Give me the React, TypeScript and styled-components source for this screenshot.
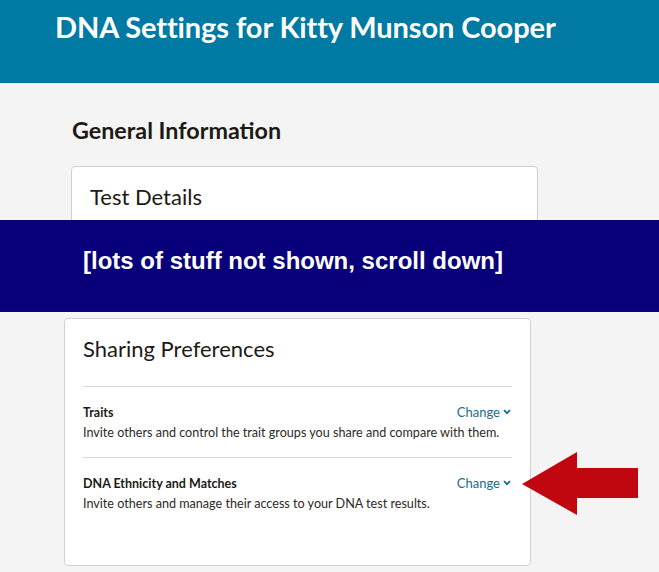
import { FC } from 'react'
import styled, { createGlobalStyle } from 'styled-components'

const GlobalStyle = createGlobalStyle`
  html, body {
    margin: 0;
    padding: 0;
    background: #f4f4f4;
  }
  body {
    font-family: Lato, "Source Sans Pro", "Noto Sans", sans-serif;
    color: #1d1a15;
  }
`

const Page = styled.div`
  width: 659px;
  height: 572px;
  overflow: hidden;
  position: relative;
  background: #f4f4f4;
`

const Header = styled.header`
  height: 83px;
  background: #0079a3;
  box-sizing: border-box;
  padding: 9px 0 0 55px;
`

const Title = styled.h1`
  margin: 0;
  color: #fff;
  font-size: 29px;
  font-weight: 700;
  line-height: 36px;
  letter-spacing: -0.1px;
`

const Section = styled.section<{ $left: number }>`
  padding-left: ${({ $left }) => $left}px;
`

const SectionHeading = styled.h2`
  margin: 0;
  padding: 33px 0 0 1px;
  font-size: 23.3px;
  font-weight: 700;
  line-height: 28px;
`

const Card = styled.div<{ $clip?: boolean }>`
  width: 467px;
  box-sizing: border-box;
  background: #fff;
  border: 1px solid #d0d0d0;
  border-radius: 4px;
  padding: 0 18px;
  ${({ $clip }) =>
    $clip
      ? `
    height: 60px;
    margin-top: 22px;
    margin-bottom: -6px;
    overflow: hidden;
  `
      : `
    height: 248px;
    margin-top: 6px;
  `}
`

const CardTitle = styled.h3`
  margin: 0;
  padding-top: 16px;
  font-size: 22px;
  font-weight: 400;
  line-height: 28px;
`

const Banner = styled.div`
  position: relative;
  height: 92px;
  background: #08007a;
  box-sizing: border-box;
  padding: 26px 0 0 83px;
  color: #fff;
  font-family: "Liberation Sans", Arial, sans-serif;
  font-size: 24px;
  font-weight: 700;
  line-height: 30px;
`

const Divider = styled.hr`
  margin: 0;
  border: 0;
  border-top: 1px solid #d9d9d9;
`

const PrefList = styled.div`
  margin-top: 23px;
`

const PrefRow = styled.div`
  padding: 17px 0 15px;
  display: grid;
  grid-template-columns: 1fr auto;
  row-gap: 2px;
`

const PrefName = styled.span`
  font-size: 12.5px;
  font-weight: 700;
  line-height: 18px;
`

const PrefText = styled.span`
  grid-column: 1 / span 2;
  font-size: 12.6px;
  line-height: 18px;
  color: #2d2a25;
  white-space: nowrap;
`

const ChangeLink = styled.a`
  display: inline-flex;
  align-items: center;
  gap: 3px;
  font-size: 13px;
  line-height: 18px;
  color: #1a6b8c;
  text-decoration: none;
  margin-top: -2px;
  padding-right: 1px;
`

const Arrow = styled.svg`
  position: absolute;
  left: 522px;
  top: 451px;
`

const Chevron: FC = () => (
  <svg width="8" height="6" viewBox="0 0 8 6">
    <path d="M1 1.2 L4 4.2 L7 1.2" fill="none" stroke="#1a6b8c" strokeWidth="1.8" />
  </svg>
)

const prefs = [
  {
    name: 'Traits',
    text: 'Invite others and control the trait groups you share and compare with them.',
  },
  {
    name: 'DNA Ethnicity and Matches',
    text: 'Invite others and manage their access to your DNA test results.',
  },
]

const App: FC = () => {
  return (
    <Page>
      <GlobalStyle />
      <Header>
        <Title>DNA Settings for Kitty Munson Cooper</Title>
      </Header>
      <Section $left={71}>
        <SectionHeading>General Information</SectionHeading>
        <Card $clip>
          <CardTitle>Test Details</CardTitle>
        </Card>
      </Section>
      <Banner>[lots of stuff not shown, scroll down]</Banner>
      <Section $left={64}>
        <Card>
          <CardTitle>Sharing Preferences</CardTitle>
          <PrefList>
            {prefs.map((p) => (
              <div key={p.name}>
                <Divider />
                <PrefRow>
                  <PrefName>{p.name}</PrefName>
                  <ChangeLink href="#">
                    Change <Chevron />
                  </ChangeLink>
                  <PrefText>{p.text}</PrefText>
                </PrefRow>
              </div>
            ))}
          </PrefList>
        </Card>
      </Section>
      <Arrow width="118" height="66" viewBox="0 0 118 66">
        <polygon points="0,33 55,1 55,17 116,17 116,47 55,47 55,64" fill="#c0070f" />
      </Arrow>
    </Page>
  )
}

export default App
